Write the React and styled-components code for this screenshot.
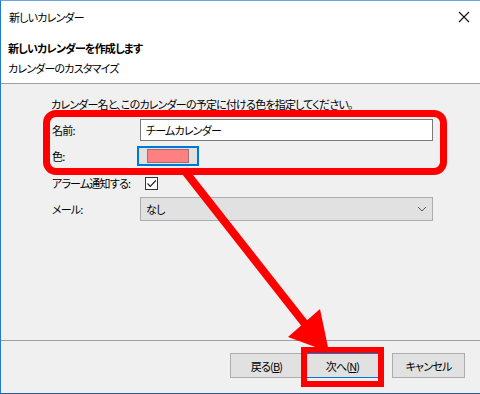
import React from "react";
import styled, { createGlobalStyle } from "styled-components";

const Global = createGlobalStyle`
  html, body { margin: 0; padding: 0; background: #fff; }
  body {
    font-family: "Noto Sans CJK JP", "Noto Sans", sans-serif;
    font-size: 11px;
    letter-spacing: -0.8px;
    color: #000;
    font-feature-settings: "palt";
  }
  * { box-sizing: border-box; }
`;

const Window = styled.div`
  position: relative;
  width: 480px;
  height: 394px;
  display: flex;
  flex-direction: column;
  background: #f0f0f0;
  border-left: 1px solid #1f7bd4;
  border-top: 1px solid #6aa6e0;
  border-bottom: 1px solid #2a5c93;
  overflow: hidden;
`;

const TitleBar = styled.div`
  height: 32px;
  flex: none;
  background: #fff;
  display: flex;
  align-items: center;
  justify-content: space-between;
  padding: 0 10px 0 8px;
`;

const Header = styled.div`
  height: 51px;
  flex: none;
  background: #fff;
  border-bottom: 1px solid #a0a0a0;
  padding: 5px 0 0 7px;
  display: flex;
  flex-direction: column;
`;

const HeaderLine = styled.div`
  height: 20px;
  line-height: 20px;
  font-weight: ${(p) => (p.$bold ? 700 : 400)};
`;

const Body = styled.div`
  flex: 1;
  padding: 10px 0 0 50px;
  display: flex;
  flex-direction: column;
`;

const Description = styled.div`
  height: 20px;
  line-height: 20px;
  white-space: nowrap;
`;

const FormRow = styled.div`
  display: grid;
  grid-template-columns: 89px 293px;
  align-items: center;
  height: ${(p) => p.$h}px;
  margin-top: ${(p) => p.$mt}px;
`;

const Label = styled.div`
  padding-left: 1px;
  line-height: 20px;
  white-space: nowrap;
`;

const TextInput = styled.div`
  height: 22px;
  background: #fff;
  border: 1px solid #7a7a7a;
  padding-left: 5px;
  line-height: 20px;
`;

const ColorButton = styled.div`
  width: 62px;
  height: 20px;
  margin-left: -3px;
  border: 2px solid #0078d7;
  background: #e1e1e1;
  display: flex;
  align-items: center;
  padding-left: 8px;
`;

const Swatch = styled.div`
  width: 42px;
  height: 14px;
  background: #ff8080;
  border: 1px solid #a07070;
`;

const Checkbox = styled.div`
  width: 13px;
  height: 13px;
  margin-left: 5px;
  border: 1px solid #333;
  background: #fff;
  display: flex;
  align-items: center;
  justify-content: center;
`;

const Select = styled.div`
  height: 24px;
  background: #e1e1e1;
  border: 1px solid #adadad;
  display: flex;
  align-items: center;
  justify-content: space-between;
  padding: 0 5px 0 5px;
`;

const Footer = styled.div`
  height: 53px;
  flex: none;
  border-top: 1px solid #a0a0a0;
  display: flex;
  justify-content: flex-end;
  align-items: flex-start;
  padding: 12px 15px 0 0;
  gap: 3px;
`;

const Button = styled.div`
  width: 73px;
  height: 25px;
  background: #e1e1e1;
  border: 1px solid ${(p) => (p.$default ? "#0078d7" : "#adadad")};
  display: flex;
  align-items: center;
  justify-content: center;
  margin-left: ${(p) => p.$ml || 0}px;
  u { text-decoration: underline; }
`;

const RedBox = styled.div`
  position: absolute;
  left: ${(p) => p.$x - 1}px;
  top: ${(p) => p.$y - 1}px;
  width: ${(p) => p.$w}px;
  height: ${(p) => p.$h}px;
  border: ${(p) => p.$stroke}px solid #ff0000;
  border-radius: ${(p) => p.$r}px;
  pointer-events: none;
`;

const ArrowLayer = styled.svg`
  position: absolute;
  left: -1px;
  top: -1px;
  width: 480px;
  height: 394px;
  pointer-events: none;
`;

export default function App() {
  return (
    <>
      <Global />
      <Window>
        <TitleBar>
          <span>新しいカレンダー</span>
          <svg width="12" height="12" viewBox="0 0 12 12">
            <path d="M1 1 L11 11 M11 1 L1 11" stroke="#111" strokeWidth="1.1" />
          </svg>
        </TitleBar>
        <Header>
          <HeaderLine $bold>新しいカレンダーを作成します</HeaderLine>
          <HeaderLine>カレンダーのカスタマイズ</HeaderLine>
        </Header>
        <Body>
          <Description>カレンダー名と、このカレンダーの予定に付ける色を指定してください。</Description>
          <FormRow $h={22} $mt={5}>
            <Label>名前:</Label>
            <TextInput>チームカレンダー</TextInput>
          </FormRow>
          <FormRow $h={20} $mt={5}>
            <Label>色:</Label>
            <ColorButton>
              <Swatch />
            </ColorButton>
          </FormRow>
          <FormRow $h={20} $mt={7}>
            <Label>アラーム通知する:</Label>
            <Checkbox>
              <svg width="11" height="11" viewBox="0 0 11 11">
                <path d="M1.5 5.5 L4.3 8.3 L9.8 2.5" fill="none" stroke="#222" strokeWidth="1.2" />
              </svg>
            </Checkbox>
          </FormRow>
          <FormRow $h={24} $mt={4}>
            <Label>メール:</Label>
            <Select>
              <span>なし</span>
              <svg width="10" height="6" viewBox="0 0 10 6">
                <path d="M1 1 L5 5 L9 1" fill="none" stroke="#555" strokeWidth="1" />
              </svg>
            </Select>
          </FormRow>
        </Body>
        <Footer>
          <Button>
            <span>戻る(<u>B</u>)</span>
          </Button>
          <Button $default>
            <span>次へ(<u>N</u>)</span>
          </Button>
          <Button $ml={10}>キャンセル</Button>
        </Footer>
        <RedBox $x={43} $y={110} $w={404} $h={65} $stroke={7} $r={13} />
        <RedBox $x={301} $y={347} $w={83} $h={40} $stroke={6} $r={0} />
        <ArrowLayer viewBox="0 0 480 394">
          <line x1="184" y1="170" x2="305" y2="324" stroke="#ff0000" strokeWidth="8" />
          <polygon points="288,337 320,309 329,352" fill="#ff0000" />
        </ArrowLayer>
      </Window>
    </>
  );
}
